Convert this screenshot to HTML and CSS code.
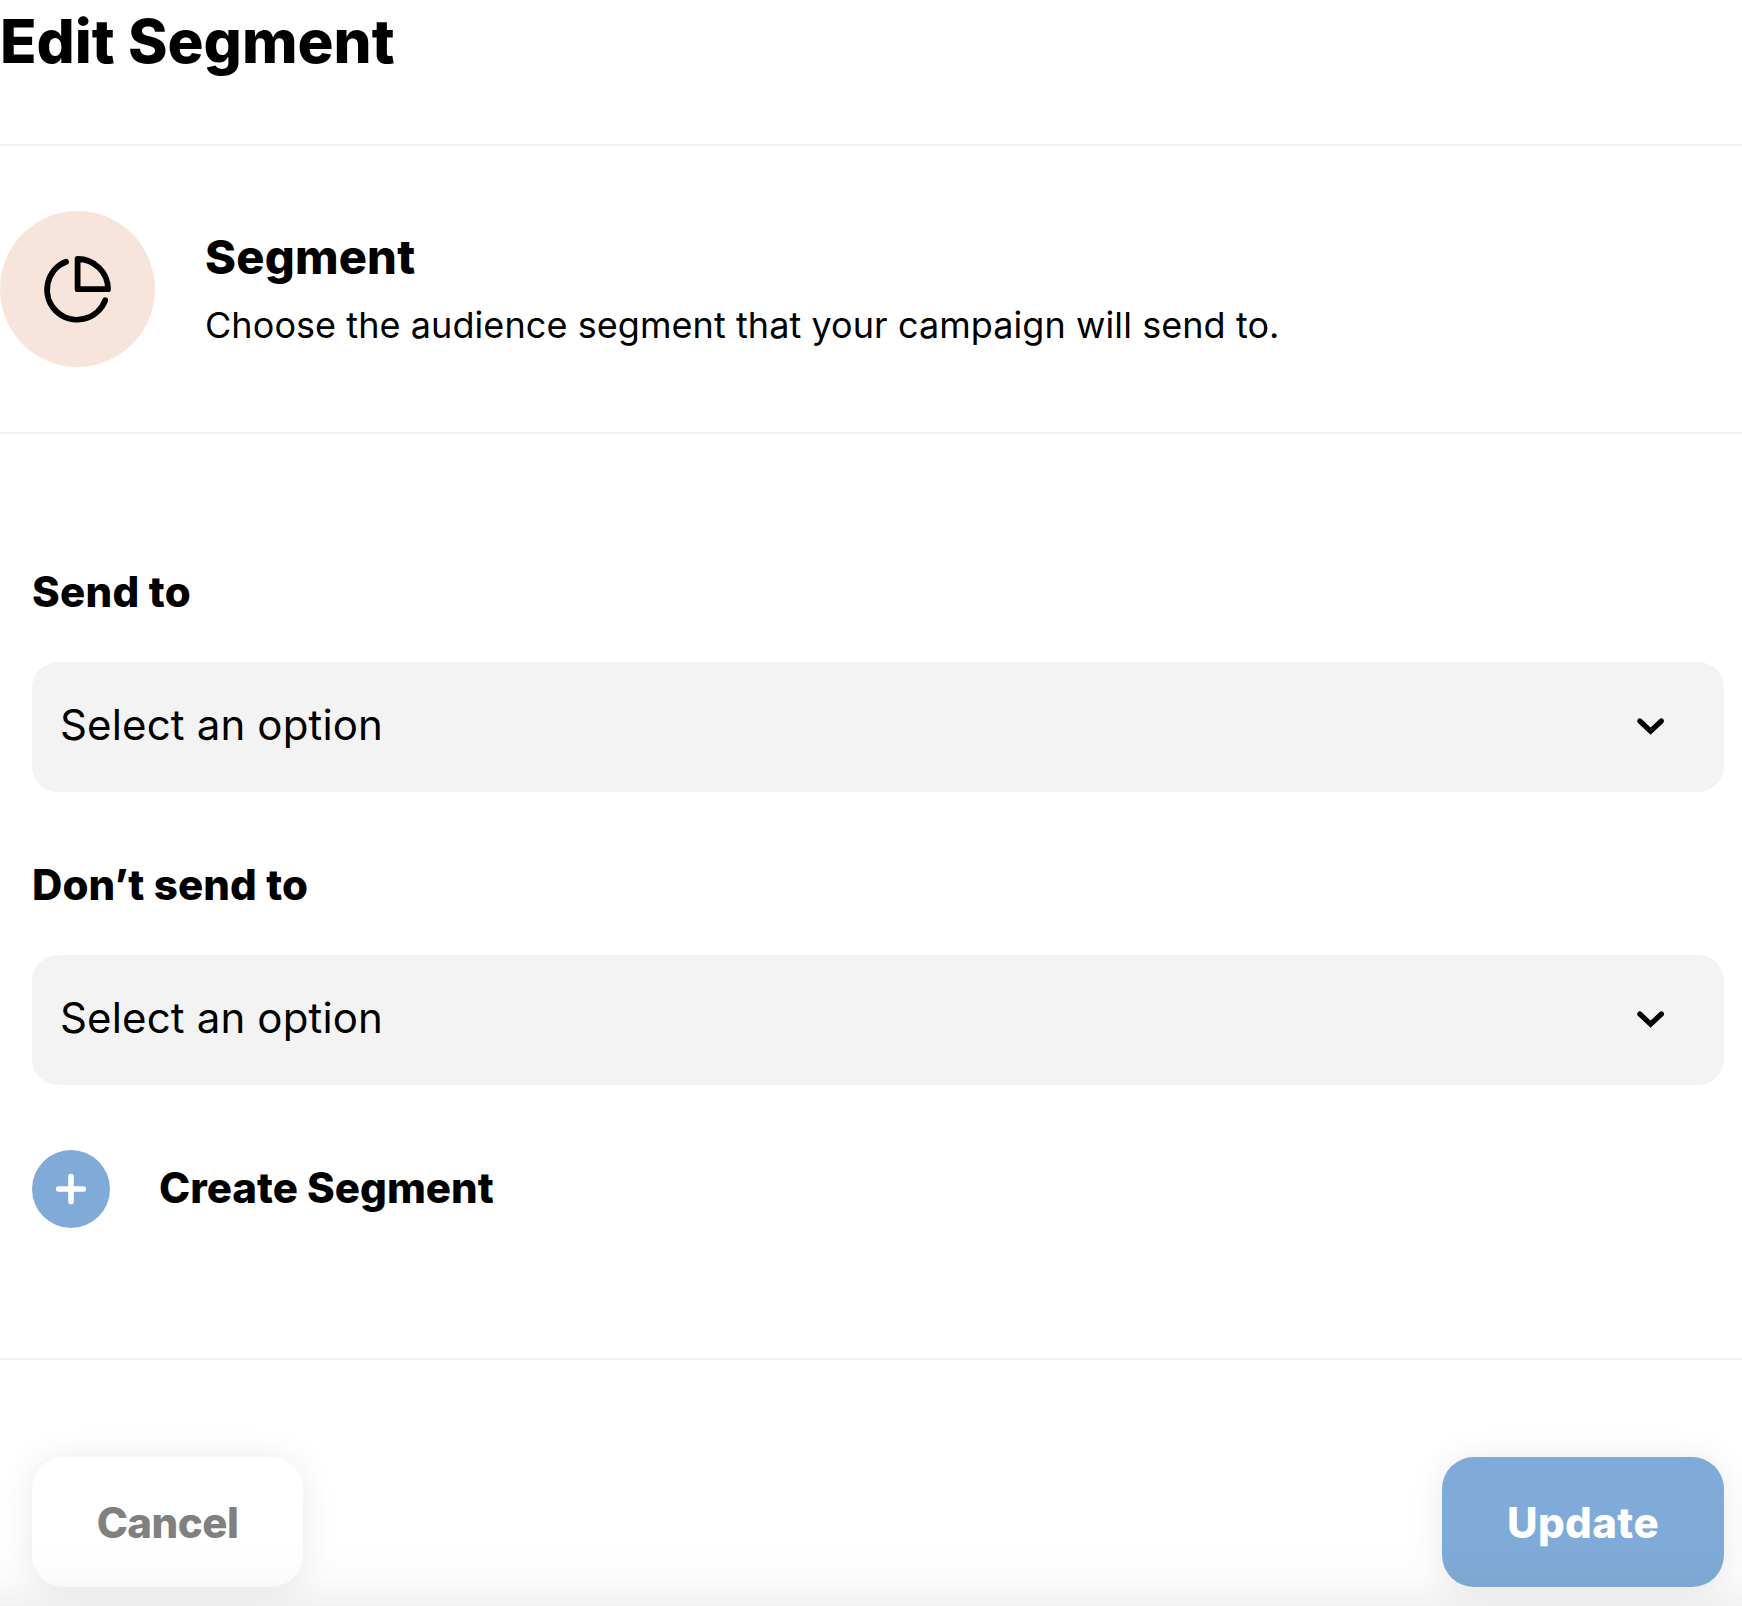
FILE: index.html
```html
<!DOCTYPE html>
<html lang="en">
  <head>
    <meta charset="utf-8">
    <title>Edit Segment</title>
    <link rel="stylesheet" href="styles.css">
  </head>
  <body>
    <div class="panel">
      <div class="panel-header">
        <h1>Edit Segment</h1>
      </div>

      <div class="intro">
        <div class="intro-icon">
          <svg width="76" height="76" viewBox="0 0 76 76" fill="none" stroke="#000" stroke-width="5.8" stroke-linecap="round" stroke-linejoin="round">
            <path d="M26 10.8A30 30 0 1 0 65.2 49.2"/>
            <path d="M37.6 8A30.3 30.3 0 0 1 68 38.2H37.6Z"/>
          </svg>
        </div>
        <div class="intro-text">
          <h2>Segment</h2>
          <p>Choose the audience segment that your campaign will send to.</p>
        </div>
      </div>

      <div class="panel-body">
        <div class="field">
          <label class="label-send">Send to</label>
          <div class="select">
            <span>Select an option</span>
            <svg width="32" height="20" viewBox="0 0 32 20" fill="none" stroke="#000" stroke-width="5.2" stroke-linecap="round" stroke-linejoin="miter">
              <path d="M4.8 4L15.6 14.2L26.4 4"/>
            </svg>
          </div>
        </div>

        <div class="field">
          <label class="label-dont">Don’t send to</label>
          <div class="select">
            <span>Select an option</span>
            <svg width="32" height="20" viewBox="0 0 32 20" fill="none" stroke="#000" stroke-width="5.2" stroke-linecap="round" stroke-linejoin="miter">
              <path d="M4.8 4L15.6 14.2L26.4 4"/>
            </svg>
          </div>
        </div>

        <div class="create">
          <div class="create-icon">
            <svg width="32" height="32" viewBox="0 0 32 32" fill="none" stroke="#fff" stroke-width="5.6" stroke-linecap="round">
              <path d="M16 3.6V28.4M3.6 16H28.4"/>
            </svg>
          </div>
          <span>Create Segment</span>
        </div>
      </div>

      <div class="panel-footer">
        <button type="button" class="btn btn-cancel">Cancel</button>
        <button type="button" class="btn btn-update">Update</button>
      </div>
    </div>
  </body>
</html>
```
FILE: styles.css
```css
* {
  box-sizing: border-box;
  margin: 0;
  padding: 0;
}

body {
  background-color: #fff;
  color: #000;
  font-family: Inter, sans-serif;
  overflow: hidden;
}

.panel {
  position: relative;
  display: flex;
  flex-direction: column;
  height: 1606px;
}

/* shade along the bottom edge */
.panel::after {
  content: "";
  position: absolute;
  left: 0;
  right: 0;
  bottom: 0;
  height: 70px;
  background: linear-gradient(rgba(0, 0, 0, 0), rgba(0, 0, 0, 0.013) 55%, rgba(0, 0, 0, 0.05));
  pointer-events: none;
}

.panel-header {
  height: 146px;
  border-bottom: 2px solid #f1f1f1;
}

.panel-header h1 {
  font-size: 60px;
  font-weight: 800;
  line-height: 82px;
}

.intro {
  display: flex;
  align-items: center;
  gap: 50px;
  height: 288px;
  border-bottom: 2px solid #f1f1f1;
}

.intro-icon {
  display: flex;
  align-items: center;
  justify-content: center;
  width: 155px;
  height: 156px;
  border-radius: 50%;
  background-color: #f7e5dc;
}

.intro-text h2 {
  margin-bottom: 16px;
  font-size: 47px;
  font-weight: 800;
  line-height: 56px;
  letter-spacing: 0.2px;
}

.intro-text p {
  font-size: 36px;
  line-height: 48px;
  letter-spacing: 0.07px;
}

.panel-body {
  height: 926px;
  padding: 133px 18px 0 32px;
  border-bottom: 2px solid #f1f1f1;
}

.field {
  margin-bottom: 68px;
}

.field label {
  display: block;
  margin-bottom: 45px;
  font-size: 42px;
  font-weight: 800;
  line-height: 50px;
}

.label-send {
  letter-spacing: 0.25px;
}

.label-dont {
  letter-spacing: 0.1px;
}

.select {
  display: flex;
  align-items: center;
  justify-content: space-between;
  height: 130px;
  padding: 0 57px 0 28px;
  border-radius: 26px;
  background-color: #f3f3f3;
  font-size: 42px;
  letter-spacing: 0.15px;
}

.select span {
  padding-bottom: 5px;
}

.create {
  display: flex;
  align-items: center;
  gap: 49px;
  margin-top: -3px;
  font-size: 42px;
  font-weight: 800;
}

.create span {
  padding-bottom: 4px;
}

.create-icon {
  display: flex;
  align-items: center;
  justify-content: center;
  width: 78px;
  height: 78px;
  border-radius: 50%;
  background-color: #80aad7;
}

.panel-footer {
  display: flex;
  justify-content: space-between;
  padding: 97px 18px 0 32px;
}

.btn {
  height: 130px;
  border: none;
  border-radius: 32px;
  box-shadow: 0 2px 36px rgba(0, 0, 0, 0.09);
  font-family: inherit;
  font-size: 42px;
  font-weight: 800;
}

.btn-cancel {
  width: 271px;
  background-color: #fff;
  color: #808080;
  letter-spacing: -0.5px;
}

.btn-update {
  width: 282px;
  background-color: #80aad7;
  color: #fff;
  letter-spacing: 0.4px;
}
```
